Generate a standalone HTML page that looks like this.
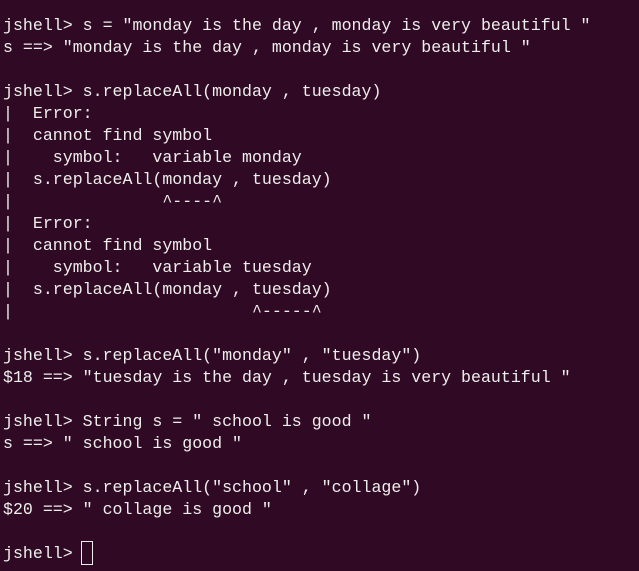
<!DOCTYPE html>
<html><head><style>
html,body{margin:0;padding:0;background:#300a24;width:639px;height:571px;overflow:hidden}
pre{margin:0;position:absolute;left:3px;top:15px;font-family:"Liberation Mono",monospace;font-size:16.6px;line-height:22px;color:#eeeeec;letter-spacing:0}
.cur{display:inline-block;width:12px;height:24px;border:1px solid #eeeeec;vertical-align:top;box-sizing:border-box;margin-top:-2px;margin-left:-2px}
</style></head><body>
<pre>jshell&gt; s = "monday is the day , monday is very beautiful "
s ==&gt; "monday is the day , monday is very beautiful "

jshell&gt; s.replaceAll(monday , tuesday)
|  Error:
|  cannot find symbol
|    symbol:   variable monday
|  s.replaceAll(monday , tuesday)
|               ^----^
|  Error:
|  cannot find symbol
|    symbol:   variable tuesday
|  s.replaceAll(monday , tuesday)
|                        ^-----^

jshell&gt; s.replaceAll("monday" , "tuesday")
$18 ==&gt; "tuesday is the day , tuesday is very beautiful "

jshell&gt; String s = " school is good "
s ==&gt; " school is good "

jshell&gt; s.replaceAll("school" , "collage")
$20 ==&gt; " collage is good "

jshell&gt; <span class="cur"></span></pre>
</body></html>
